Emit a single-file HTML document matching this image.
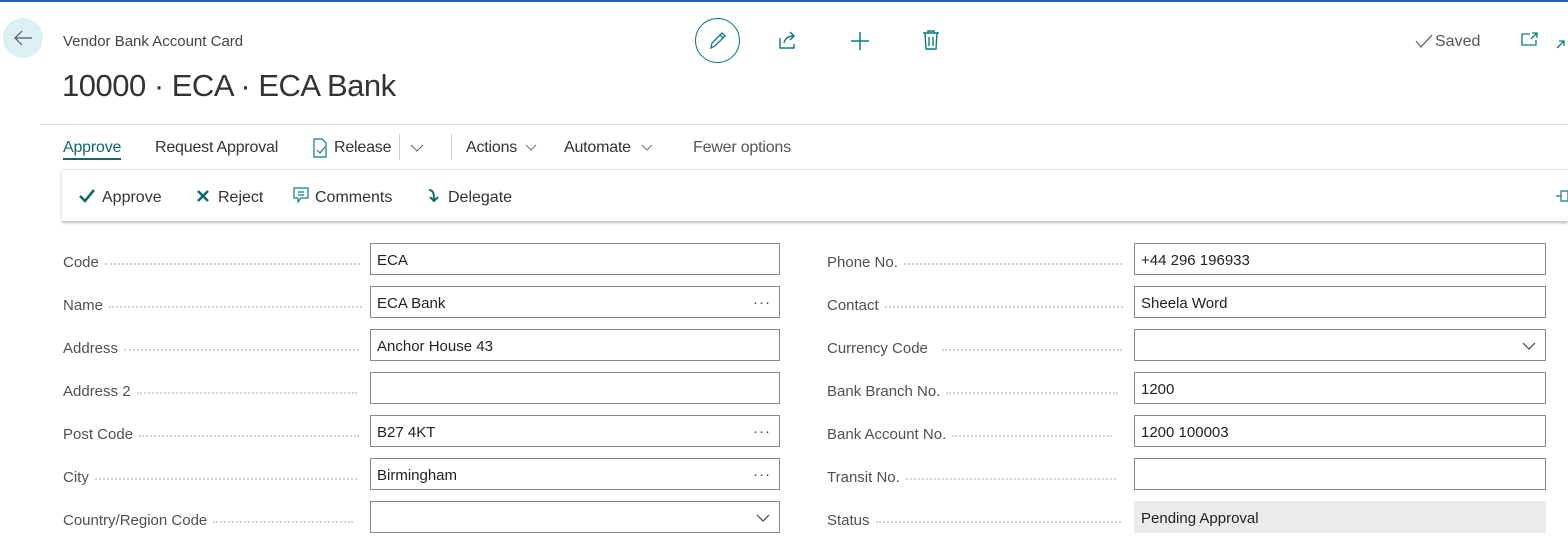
<!DOCTYPE html>
<html><head><style>
*{box-sizing:border-box;margin:0;padding:0}
body{width:1568px;height:560px;overflow:hidden;background:#fff;font-family:"Liberation Sans",sans-serif;color:#333;position:relative}
.a{position:absolute;white-space:nowrap}
.lbl{position:absolute;font-size:15px;color:#505050;display:flex;align-items:center;height:20px}
.lbl .d{border-bottom:2px dotted #d4d4d4;height:0;margin-left:6px;margin-top:4px}
.inp{position:absolute;height:32px;border:1px solid #8a8a8a;font-size:15px;color:#222;padding:0 6px;line-height:34px;background:#fff}
.inp .e{position:absolute;right:8px;top:-1px;color:#444;letter-spacing:1px}
.tb{font-size:16px;color:#333;top:139px;letter-spacing:-0.2px}
</style></head><body>
<div class="a" style="left:0;top:0;width:1568px;height:2px;background:#2a5db0"></div>
<div class="a" style="left:3px;top:18px;width:40px;height:40px;border-radius:50%;background:#dcf0f3"></div>
<svg class="a" style="left:12px;top:28px" width="22" height="20"><path d="M20 10H3M10 3L3 10l7 7" stroke="#555" stroke-width="1.2" fill="none"/></svg>
<div class="a" style="left:63px;top:33px;font-size:15px;color:#444">Vendor Bank Account Card</div>
<div class="a" style="left:62px;top:68px;font-size:31px;color:#333;letter-spacing:-0.5px">10000 · ECA · ECA Bank</div>
<div class="a" style="left:695px;top:18px;width:45px;height:45px;border-radius:50%;border:1.3px solid #0e7a7a"></div>
<svg class="a" style="left:706px;top:29px" width="24" height="24"><path d="M5 19l1-5L16 4l3 3L9 17z M14 6l3 3" stroke="#0e7a7a" stroke-width="1.3" fill="none"/></svg>
<svg class="a" style="left:777px;top:30px" width="22" height="20"><path d="M3 8v10h14v-4M7 13c1-5 5-7 10-7M13 2l4 4-4 4" stroke="#0e7a7a" stroke-width="1.4" fill="none"/></svg>
<svg class="a" style="left:849px;top:30px" width="22" height="22"><path d="M11 2v18M2 11h18" stroke="#0e7a7a" stroke-width="1.5"/></svg>
<svg class="a" style="left:921px;top:29px" width="20" height="22"><path d="M2 4h16M7 4V2h6v2M4 4l1 16h10l1-16M8 8v9M12 8v9" stroke="#0e7a7a" stroke-width="1.4" fill="none"/></svg>
<svg class="a" style="left:1414px;top:33px" width="20" height="16"><path d="M2 8l5 6L18 2" stroke="#666" stroke-width="1.3" fill="none"/></svg>
<div class="a" style="left:1435px;top:33px;font-size:16px;color:#555">Saved</div>
<svg class="a" style="left:1520px;top:31px" width="20" height="16"><path d="M10 3H2v11h14V9M12 2h5v5M17 2l-6 6" stroke="#0e7a7a" stroke-width="1.3" fill="none"/></svg>
<svg class="a" style="left:1555px;top:38px" width="12" height="12"><path d="M2 10L9 3M4 3h5v5" stroke="#0e7a7a" stroke-width="1.3" fill="none"/></svg>
<div class="a" style="left:40px;top:124px;width:1528px;height:1px;background:#ddd"></div>
<div class="a tb" style="left:63px;color:#0e6b6b;border-bottom:2px solid #0e6b6b;padding-bottom:1px">Approve</div>
<div class="a tb" style="left:155px">Request Approval</div>
<svg class="a" style="left:312px;top:138px" width="16" height="20"><path d="M2 1h8l4 4v14H2z M5 12l3 3 5-6" stroke="#0e7a7a" stroke-width="1.2" fill="none"/></svg>
<div class="a tb" style="left:334px">Release</div>
<div class="a" style="left:399px;top:134px;width:1px;height:26px;background:#ccc"></div>
<svg class="a" style="left:409px;top:143px" width="16" height="10"><path d="M2 2l6 6 6-6" stroke="#666" stroke-width="1.1" fill="none"/></svg>
<div class="a" style="left:451px;top:134px;width:1px;height:26px;background:#ccc"></div>
<div class="a tb" style="left:466px">Actions</div>
<svg class="a" style="left:524px;top:143px" width="14" height="10"><path d="M2 2l5 5 5-5" stroke="#777" stroke-width="1.1" fill="none"/></svg>
<div class="a tb" style="left:564px">Automate</div>
<svg class="a" style="left:640px;top:143px" width="14" height="10"><path d="M2 2l5 5 5-5" stroke="#777" stroke-width="1.1" fill="none"/></svg>
<div class="a tb" style="left:693px;color:#555">Fewer options</div>
<div class="a" style="left:62px;top:169px;width:1506px;height:52px;background:#fff;border-top:1px solid #e2e2e2;box-shadow:0 2px 3px #bbb"></div>
<svg class="a" style="left:78px;top:188px" width="18" height="16"><path d="M2 8l5 5 9-11" stroke="#0e6b6b" stroke-width="2.6" fill="none"/></svg>
<div class="a" style="left:102px;top:189px;font-size:16px">Approve</div>
<svg class="a" style="left:196px;top:189px" width="14" height="14"><path d="M2 2l10 10M12 2L2 12" stroke="#0e6b6b" stroke-width="2.6"/></svg>
<div class="a" style="left:218px;top:189px;font-size:16px">Reject</div>
<svg class="a" style="left:292px;top:186px" width="18" height="20"><path d="M2 2h14v10H9l-3 4v-4H2z M6 6h6M6 9h6" stroke="#0e7a7a" stroke-width="1.2" fill="none"/></svg>
<div class="a" style="left:315px;top:189px;font-size:16px">Comments</div>
<svg class="a" style="left:426px;top:188px" width="14" height="16"><path d="M3 2c5 0 5 5 5 11M4 9l4 4 4-4" stroke="#0e6b6b" stroke-width="2" fill="none"/></svg>
<div class="a" style="left:448px;top:189px;font-size:16px">Delegate</div>
<svg class="a" style="left:1556px;top:189px" width="12" height="14"><path d="M0 7h5M5 2h7v10H5z" stroke="#0e7a7a" stroke-width="1.2" fill="none"/></svg>

<div class="lbl" style="left:63px;top:252px">Code<span class="d" style="width:255px"></span></div>
<div class="inp" style="left:370px;top:243px;width:410px">ECA</div>
<div class="lbl" style="left:63px;top:295px">Name<span class="d" style="width:253px"></span></div>
<div class="inp" style="left:370px;top:286px;width:410px">ECA Bank<span class="e">···</span></div>
<div class="lbl" style="left:63px;top:338px">Address<span class="d" style="width:235px"></span></div>
<div class="inp" style="left:370px;top:329px;width:410px">Anchor House 43</div>
<div class="lbl" style="left:63px;top:381px">Address 2<span class="d" style="width:220px"></span></div>
<div class="inp" style="left:370px;top:372px;width:410px"></div>
<div class="lbl" style="left:63px;top:424px">Post Code<span class="d" style="width:220px"></span></div>
<div class="inp" style="left:370px;top:415px;width:410px">B27 4KT<span class="e">···</span></div>
<div class="lbl" style="left:63px;top:467px">City<span class="d" style="width:262px"></span></div>
<div class="inp" style="left:370px;top:458px;width:410px">Birmingham<span class="e">···</span></div>
<div class="lbl" style="left:63px;top:510px">Country/Region Code<span class="d" style="width:140px"></span></div>
<div class="inp" style="left:370px;top:501px;width:410px"><svg style="position:absolute;right:8px;top:11px" width="16" height="10"><path d="M2 2l6 6 6-6" stroke="#444" stroke-width="1.2" fill="none"/></svg></div>

<div class="lbl" style="left:827px;top:252px">Phone No.<span class="d" style="width:218px"></span></div>
<div class="inp" style="left:1134px;top:243px;width:412px">+44 296 196933</div>
<div class="lbl" style="left:827px;top:295px">Contact<span class="d" style="width:238px"></span></div>
<div class="inp" style="left:1134px;top:286px;width:412px">Sheela Word</div>
<div class="lbl" style="left:827px;top:338px">Currency Code<span class="d" style="width:180px;margin-left:14px"></span></div>
<div class="inp" style="left:1134px;top:329px;width:412px"><svg style="position:absolute;right:8px;top:11px" width="16" height="10"><path d="M2 2l6 6 6-6" stroke="#444" stroke-width="1.2" fill="none"/></svg></div>
<div class="lbl" style="left:827px;top:381px">Bank Branch No.<span class="d" style="width:172px"></span></div>
<div class="inp" style="left:1134px;top:372px;width:412px">1200</div>
<div class="lbl" style="left:827px;top:424px">Bank Account No.<span class="d" style="width:160px"></span></div>
<div class="inp" style="left:1134px;top:415px;width:412px">1200 100003</div>
<div class="lbl" style="left:827px;top:467px">Transit No.<span class="d" style="width:210px"></span></div>
<div class="inp" style="left:1134px;top:458px;width:412px"></div>
<div class="lbl" style="left:827px;top:510px">Status<span class="d" style="width:245px"></span></div>
<div class="inp" style="left:1134px;top:501px;width:412px;background:#ebebeb;border-color:#ebebeb">Pending Approval</div>
</body></html>
